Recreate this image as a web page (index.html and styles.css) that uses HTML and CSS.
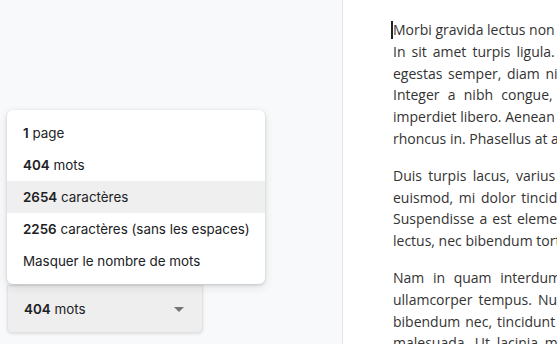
FILE: index.html
```html
<!DOCTYPE html>
<html lang="fr">
<head>
<meta charset="utf-8">
<title>Nombre de mots</title>
<link rel="stylesheet" href="styles.css">
</head>
<body>
<div class="app">
  <aside class="side">
    <div class="wc">
      <div class="menu">
        <div class="item"><span><b>1</b> page</span></div>
        <div class="item"><span><b>404</b> mots</span></div>
        <div class="item active"><span><b>2654</b> caractères</span></div>
        <div class="item"><span><b>2256</b> caractères (sans les espaces)</span></div>
        <div class="item"><span>Masquer le nombre de mots</span></div>
      </div>
      <button class="wc-btn" type="button">
        <span><b>404</b> mots</span>
        <svg class="caret-down" width="10" height="5" viewBox="0 0 10 5"><path d="M0 0h10L5 5z" fill="#757575"/></svg>
      </button>
    </div>
  </aside>
  <main class="doc">
    <p class="para">
      <span class="ln"><span class="cursor"></span>Morbi gravida lectus non mauris porta, vitae</span>
      <span class="ln s24">In sit amet turpis ligula. Vestibulum ante</span>
      <span class="ln s20">egestas semper, diam nisi blandit nulla, eget</span>
      <span class="ln s46">Integer a nibh congue, cursus purus vel,</span>
      <span class="ln">imperdiet libero. Aenean aliquet velit eget</span>
      <span class="ln">rhoncus in. Phasellus at auctor mi.</span>
    </p>
    <p class="para">
      <span class="ln s27">Duis turpis lacus, varius at mollis nec,</span>
      <span class="ln s20">euismod, mi dolor tincidunt dolor, sed</span>
      <span class="ln s15">Suspendisse a est elementum, pretium nisi</span>
      <span class="ln">lectus, nec bibendum tortor sapien eu est.</span>
    </p>
    <p class="para">
      <span class="ln s50">Nam in quam interdum, fermentum</span>
      <span class="ln s25">ullamcorper tempus. Nunc vel ipsum</span>
      <span class="ln s14">bibendum nec, tincidunt sed lorem, eget</span>
      <span class="ln s30">malesuada. Ut lacinia magna vel orci</span>
    </p>
  </main>
</div>
</body>
</html>
```

FILE: styles.css
```css
* { box-sizing: border-box; }
html, body { margin: 0; height: 100%; }
body {
  background: #f8f9fa;
  overflow: hidden;
  font-family: Inter, "Noto Sans", sans-serif;
  color: #202124;
}
.app {
  display: flex;
  height: 344px;
}
.side {
  flex: none;
  width: 342px;
  display: flex;
  flex-direction: column;
  justify-content: flex-end;
  padding: 0 0 11px 7px;
}
.wc {
  position: relative;
  width: 196px;
}
.menu {
  position: absolute;
  left: 0;
  bottom: calc(100% + 1px);
  width: 258px;
  padding: 7px 0;
  background: #fff;
  border-radius: 6px;
  box-shadow: 0 1px 3px rgba(60,64,67,.22), 0 3px 10px rgba(60,64,67,.12);
  z-index: 2;
}
.item {
  height: 32px;
  display: flex;
  align-items: center;
  padding-left: 16px;
  font-size: 13.4px;
  white-space: nowrap;
}
.item b, .wc-btn b { font-weight: 600; }
.item.active { background: #efefef; }
.wc-btn {
  width: 100%;
  height: 48px;
  display: flex;
  align-items: center;
  justify-content: space-between;
  padding: 0 18px 0 16px;
  border: 1px solid #e2e2e2;
  border-radius: 0 0 5px 5px;
  background: #eeeeee;
  box-shadow: 0 1px 3px rgba(60,64,67,.15);
  font: 13.4px Inter, "Noto Sans", sans-serif;
  color: #202124;
}
.doc {
  flex: none;
  width: 720px;
  background: #fff;
  border-left: 1px solid #e4e5e7;
  padding: 19px 0 0 50px;
  font-family: "Open Sans", sans-serif;
  font-size: 14px;
  line-height: 21.8px;
  color: #333;
}
.para { margin: 0 0 15px; }
.ln { display: block; white-space: nowrap; }
.s14 { word-spacing: 1.4px; }
.s15 { word-spacing: 1.5px; }
.s20 { word-spacing: 2px; }
.s24 { word-spacing: 2.4px; }
.s25 { word-spacing: 2.5px; }
.s27 { word-spacing: 2.7px; }
.s30 { word-spacing: 3px; }
.s46 { word-spacing: 4.6px; }
.s50 { word-spacing: 5px; }
.cursor {
  display: inline-block;
  width: 2px;
  height: 18px;
  margin-left: -2px;
  vertical-align: -4px;
  background: #222;
}
```
